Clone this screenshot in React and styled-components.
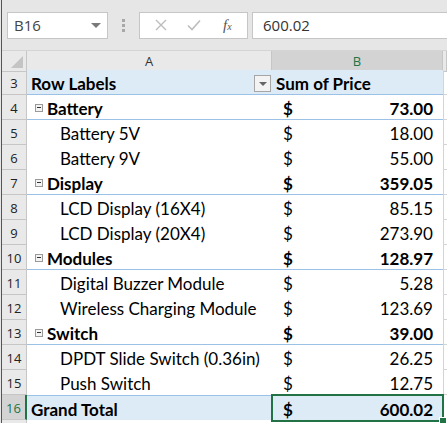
import React from 'react';
import styled, { createGlobalStyle, css } from 'styled-components';

const GlobalStyle = createGlobalStyle`
  html, body {
    margin: 0;
    padding: 0;
    width: 447px;
    height: 423px;
    overflow: hidden;
    background: #e6e6e6;
  }
  * { box-sizing: border-box; }
`;

const rows = [
  { n: 4, kind: 'cat', label: 'Battery', value: '73.00' },
  { n: 5, kind: 'item', label: 'Battery 5V', value: '18.00' },
  { n: 6, kind: 'item', label: 'Battery 9V', value: '55.00' },
  { n: 7, kind: 'cat', label: 'Display', value: '359.05' },
  { n: 8, kind: 'item', label: 'LCD Display (16X4)', value: '85.15' },
  { n: 9, kind: 'item', label: 'LCD Display (20X4)', value: '273.90' },
  { n: 10, kind: 'cat', label: 'Modules', value: '128.97' },
  { n: 11, kind: 'item', label: 'Digital Buzzer Module', value: '5.28' },
  { n: 12, kind: 'item', label: 'Wireless Charging Module', value: '123.69' },
  { n: 13, kind: 'cat', label: 'Switch', value: '39.00' },
  { n: 14, kind: 'item', label: 'DPDT Slide Switch (0.36in)', value: '26.25' },
  { n: 15, kind: 'item', label: 'Push Switch', value: '12.75' },
];

const App = () => {
  return (
    <>
      <GlobalStyle />
      <Window>
        <FormulaBar>
          <NameBox>
            B16
            <Caret />
          </NameBox>
          <Grip>
            <svg width="3" height="13" viewBox="0 0 3 13">
              <rect x="0" y="0" width="3" height="3" fill="#a8a8a8" />
              <rect x="0" y="5" width="3" height="3" fill="#a8a8a8" />
              <rect x="0" y="10" width="3" height="3" fill="#a8a8a8" />
            </svg>
          </Grip>
          <ButtonsBox>
            <svg width="12" height="12" viewBox="0 0 12 12">
              <path d="M1 1 L11 11 M11 1 L1 11" stroke="#bdbdbd" strokeWidth="1.4" fill="none" />
            </svg>
            <svg width="14" height="12" viewBox="0 0 14 12">
              <path d="M1 6.5 L5 10.5 L13 1.5" stroke="#bdbdbd" strokeWidth="1.6" fill="none" />
            </svg>
            <Fx>
              f<small>x</small>
            </Fx>
          </ButtonsBox>
          <FormulaInput>600.02</FormulaInput>
        </FormulaBar>

        <Sheet>
          <HeaderRow>
            <Corner />
            <ColHeader>A</ColHeader>
            <ColHeader $selected>B</ColHeader>
            <ColHeader />
          </HeaderRow>

          <Row>
            <RowHead>3</RowHead>
            <LabelCell $kind="header">
              Row Labels
              <FilterButton />
            </LabelCell>
            <ValueCell $kind="header">Sum of Price</ValueCell>
            <Blank />
          </Row>

          {rows.map((r) => (
            <Row key={r.n}>
              <RowHead>{r.n}</RowHead>
              <LabelCell $kind={r.kind}>
                {r.kind === 'cat' && <Collapse />}
                {r.label}
              </LabelCell>
              <ValueCell $kind={r.kind}>
                <span>$</span>
                <span>{r.value}</span>
              </ValueCell>
              <Blank />
            </Row>
          ))}

          <Row>
            <RowHead $selected>16</RowHead>
            <LabelCell $kind="total">Grand Total</LabelCell>
            <ValueCell $kind="total" $active>
              <span>$</span>
              <span>600.02</span>
            </ValueCell>
            <Blank />
          </Row>

          <Row>
            <RowHead />
            <LabelCell $kind="item" />
            <ValueCell $kind="item" />
            <Blank />
          </Row>
        </Sheet>
      </Window>
    </>
  );
};

const Window = styled.div`
  margin-left: 1px;
  border-left: 1px solid #217346;
  height: 423px;
  display: flex;
  flex-direction: column;
  overflow: hidden;
`;

const FormulaBar = styled.div`
  height: 50px;
  flex-shrink: 0;
  background: #e6e6e6;
  display: flex;
  align-items: center;
  padding-left: 5px;
  font-family: 'Open Sans', 'Liberation Sans', sans-serif;
`;

const NameBox = styled.div`
  width: 101px;
  height: 27px;
  background: #fff;
  border: 1px solid #c6c6c6;
  display: flex;
  align-items: center;
  justify-content: space-between;
  padding: 0 6px 0 6px;
  font-size: 15px;
  color: #444;
`;

const Caret = styled.span`
  width: 0;
  height: 0;
  border-left: 5px solid transparent;
  border-right: 5px solid transparent;
  border-top: 5px solid #7a7a7a;
`;

const Grip = styled.div`
  width: 31px;
  display: flex;
  justify-content: center;
`;

const ButtonsBox = styled.div`
  width: 109px;
  height: 27px;
  background: #fff;
  border: 1px solid #c6c6c6;
  display: flex;
  align-items: center;
  padding-left: 15px;
  gap: 20px;
`;

const Fx = styled.span`
  font-family: 'Liberation Serif', serif;
  font-style: italic;
  font-size: 15px;
  color: #555;
  margin-left: 2px;
  small {
    font-size: 10px;
  }
`;

const FormulaInput = styled.div`
  flex: 1;
  height: 27px;
  margin-left: 4px;
  margin-right: -2px;
  background: #fff;
  border: 1px solid #c6c6c6;
  display: flex;
  align-items: center;
  padding-left: 10px;
  font-size: 15px;
  color: #333;
`;

const Sheet = styled.div`
  flex: 1;
  background: #fff;
  font-family: Lato, 'Liberation Sans', sans-serif;
`;

const gridCols = css`
  display: grid;
  grid-template-columns: 25px 245px 171px 1fr;
`;

const HeaderRow = styled.div`
  ${gridCols};
  height: 20px;
  border-top: 1px solid #d4d4d4;
`;

const Corner = styled.div`
  background: #e9e9e9;
  border-right: 1px solid #c6c6c6;
  border-bottom: 1px solid #c6c6c6;
  position: relative;
  &::after {
    content: '';
    position: absolute;
    right: 3px;
    bottom: 3px;
    border-left: 12px solid transparent;
    border-bottom: 12px solid #c4c4c4;
  }
`;

const ColHeader = styled.div`
  background: ${(p) => (p.$selected ? '#d3d3d3' : '#e9e9e9')};
  color: ${(p) => (p.$selected ? '#217346' : '#333')};
  border-right: 1px solid #c6c6c6;
  border-bottom: ${(p) => (p.$selected ? '2px solid #217346' : '1px solid #c6c6c6')};
  display: flex;
  align-items: center;
  justify-content: center;
  font-family: 'Open Sans', 'Liberation Sans', sans-serif;
  font-size: 13px;
  padding-top: ${(p) => (p.$selected ? '1px' : '0')};
`;

const Row = styled.div`
  ${gridCols};
  height: 25px;
`;

const RowHead = styled.div`
  background: ${(p) => (p.$selected ? '#d3d3d3' : '#e9e9e9')};
  color: ${(p) => (p.$selected ? '#217346' : '#222')};
  border-bottom: 1px solid #c6c6c6;
  border-right: ${(p) => (p.$selected ? '2px solid #217346' : '1px solid #c6c6c6')};
  display: flex;
  align-items: center;
  justify-content: center;
  padding-top: 2px;
  font-family: 'Open Sans', 'Liberation Sans', sans-serif;
  font-size: 13px;
`;

const pivotLine = '1px solid #9bc2e6';

const kindStyles = {
  header: css`
    background: #ddebf7;
    font-weight: 700;
    border-bottom: ${pivotLine};
  `,
  cat: css`
    font-weight: 700;
    border-bottom: ${pivotLine};
  `,
  item: css``,
  total: css`
    background: #ddebf7;
    font-weight: 700;
    border-top: ${pivotLine};
  `,
};

const Cell = styled.div`
  display: flex;
  align-items: center;
  padding-top: 2px;
  font-size: 17px;
  color: #000;
  white-space: nowrap;
  ${(p) => kindStyles[p.$kind]};
`;

const LabelCell = styled(Cell)`
  padding-left: ${(p) => (p.$kind === 'cat' ? '8px' : p.$kind === 'item' ? '33px' : '4px')};
  position: relative;
`;

const ValueCell = styled(Cell)`
  position: relative;
  justify-content: ${(p) => (p.$kind === 'header' ? 'flex-start' : 'space-between')};
  padding-left: ${(p) => (p.$kind === 'header' ? '4px' : '11px')};
  padding-right: 10px;
  ${(p) =>
    p.$active &&
    css`
      &::before {
        content: '';
        position: absolute;
        left: -1px;
        top: -2px;
        right: -1px;
        bottom: -2px;
        border: 2px solid #217346;
        pointer-events: none;
      }
      &::after {
        content: '';
        position: absolute;
        right: -4px;
        bottom: -5px;
        width: 6px;
        height: 6px;
        background: #217346;
        border: 1px solid #fff;
      }
    `}
`;

const Blank = styled.div`
  border-left: 1px solid #d4d4d4;
  border-bottom: 1px solid #d4d4d4;
`;

const Collapse = styled.span`
  width: 8px;
  height: 8px;
  border: 1px solid #9a9a9a;
  background: #f4f4f4;
  margin-right: 4px;
  position: relative;
  flex-shrink: 0;
  &::after {
    content: '';
    position: absolute;
    left: 1px;
    right: 1px;
    top: 2px;
    height: 1px;
    background: #333;
  }
`;

const FilterButton = styled.span`
  position: absolute;
  right: 1px;
  top: 5px;
  width: 17px;
  height: 17px;
  border: 1px solid #a6a6a6;
  background: #f3f3f3;
  &::after {
    content: '';
    position: absolute;
    left: 4px;
    top: 6px;
    border-left: 4px solid transparent;
    border-right: 4px solid transparent;
    border-top: 4px solid #666;
  }
`;

export default App;
